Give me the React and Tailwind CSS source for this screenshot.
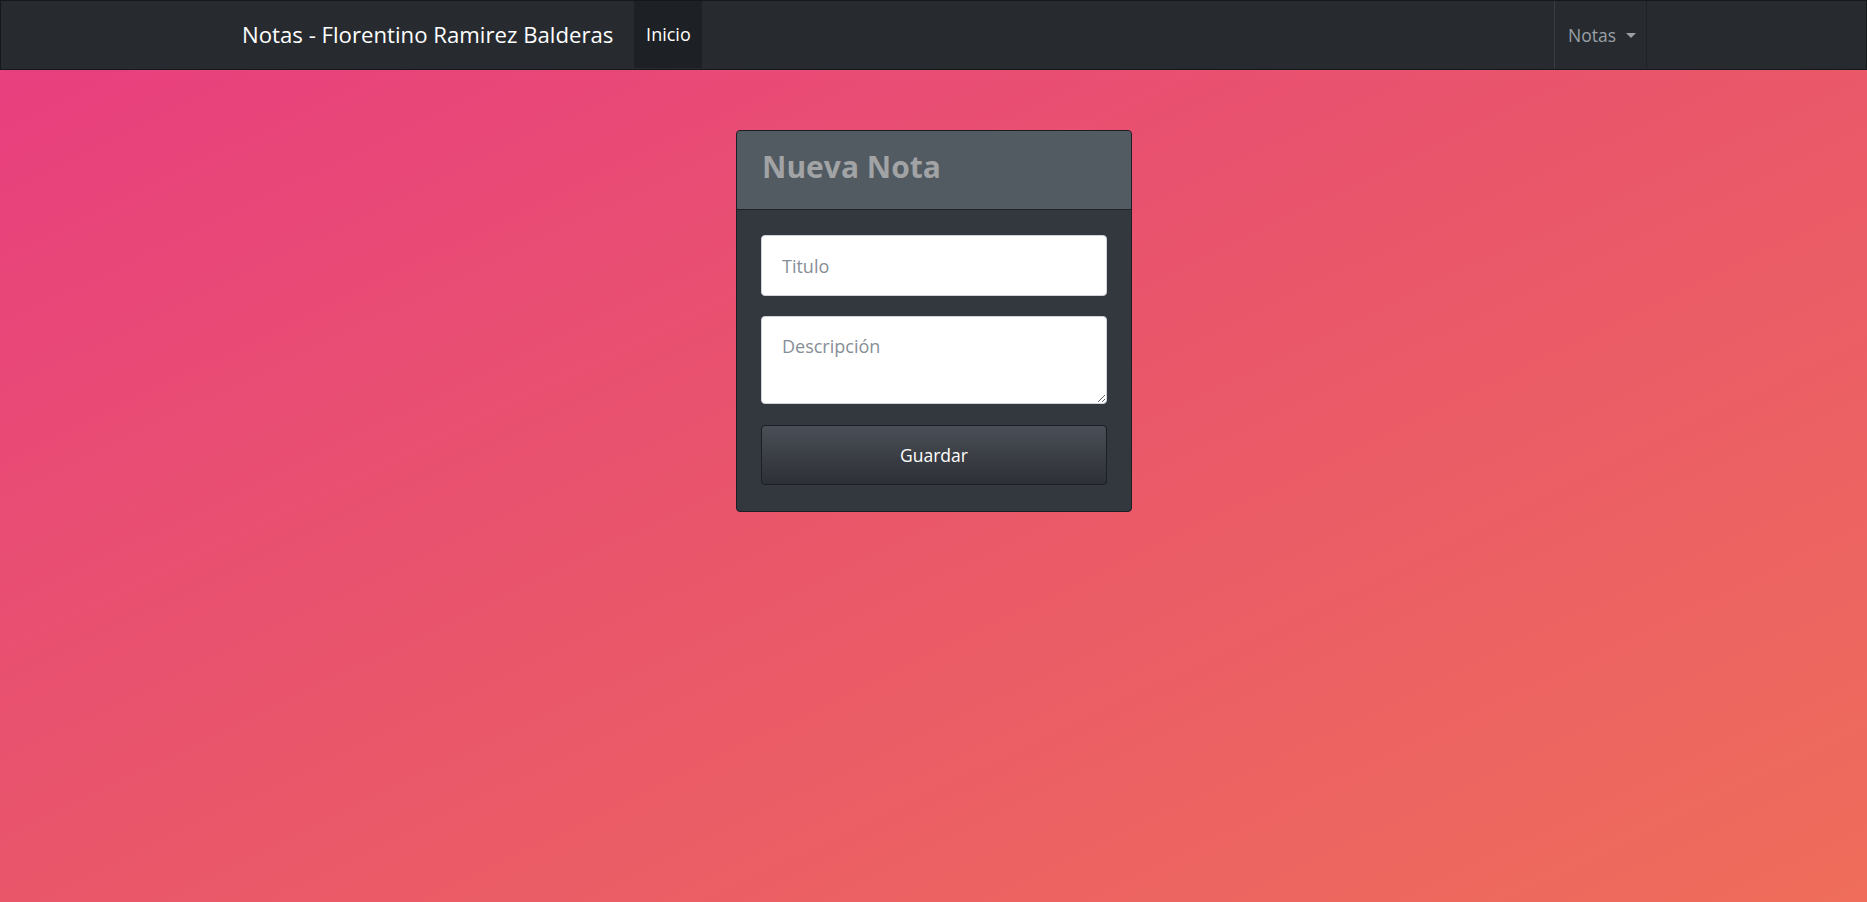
import { useState } from "react";

const font = { fontFamily: '"Open Sans", "Noto Sans", sans-serif' };

const Navbar = () => {
    return (
        <nav className="flex h-[70px] items-stretch border border-[#15181b] bg-[#272b30]">
            <div className="flex items-center pl-[241px] text-[22.2px] text-white">
                Notas - Florentino Ramirez Balderas
            </div>
            <a className="ml-[21px] mb-[1px] flex w-[68px] items-center justify-center bg-[#1d2024] text-[18px] text-white">
                Inicio
            </a>
            <div className="flex-1"></div>
            {/* Dropdown */}
            <div className="mr-[219px] flex items-center gap-[10px] border-x border-l-[#3b3f44] border-r-[#1f2226] pl-[13px] pr-[10px] text-[17.5px] text-[#9aa0a6]">
                <span>Notas</span>
                <span className="mt-[1px] h-0 w-0 border-x-[5px] border-t-[5px] border-x-transparent border-t-[#9aa0a6]"></span>
            </div>
        </nav>
    );
};

const App = () => {
    const [titulo, setTitulo] = useState("");
    const [descripcion, setDescripcion] = useState("");

    return (
        <div className="min-h-[902px] bg-linear-to-br from-[#e83c80] via-[#e9566a] to-[#ef6d5a]" style={font}>
            <Navbar />

            <div className="flex justify-center pt-[60px]">
                <div className="ml-[1px] w-[396px] overflow-hidden rounded-[4px] border border-[#1b1e22] bg-[#33373e]">
                    {/* Header */}
                    <div className="flex h-[79px] items-center border-b border-[#1f2226] bg-[#525a62] pl-[25px] pb-[7px]">
                        <h2 className="text-[30px] font-bold text-[#a1a3a5]">Nueva Nota</h2>
                    </div>

                    {/* Body */}
                    <div className="flex flex-col px-[24px] pt-[25px] pb-[26px]">
                        <input
                            value={titulo}
                            onChange={(e) => setTitulo(e.target.value)}
                            placeholder="Titulo"
                            className="h-[61px] rounded-[4px] border border-[#ced4da] bg-white px-[20px] pt-[1px] text-[18px] text-[#495057] outline-none placeholder:text-[#868e96]"
                        />
                        <textarea
                            value={descripcion}
                            onChange={(e) => setDescripcion(e.target.value)}
                            placeholder="Descripción"
                            className="mt-[20px] h-[88px] rounded-[4px] border border-[#ced4da] bg-white px-[20px] pt-[16px] text-[18px] text-[#495057] outline-none placeholder:text-[#868e96]"
                        ></textarea>
                        <button className="mt-[21px] h-[60px] rounded-[4px] border border-[#1c1f23] bg-linear-to-b from-[#4a4e56] to-[#2d3036] text-[17.5px] text-white">
                            Guardar
                        </button>
                    </div>
                </div>
            </div>
        </div>
    );
};

export default App;
